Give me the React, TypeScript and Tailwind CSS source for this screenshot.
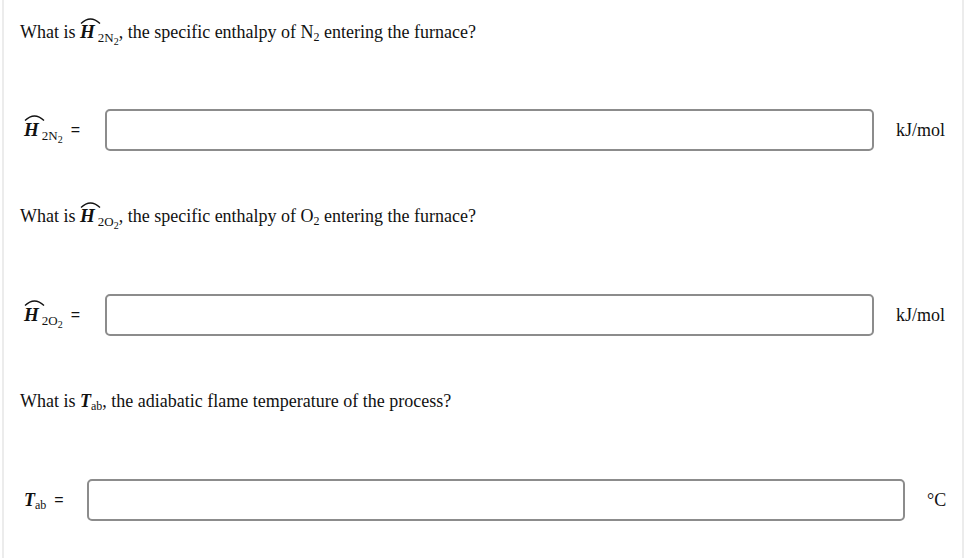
import React from 'react';

function Hat({ sub, subsub }: { sub: string; subsub: string }) {
  return (
    <span className="inline-flex items-baseline whitespace-nowrap">
      <span className="relative inline-block">
        <svg
          className="absolute left-[0px] top-[-4px]"
          width="21"
          height="8"
          viewBox="0 0 21 8"
          fill="none"
        >
          <path d="M1 7.5 Q10.5 -1.5 20 7.5" stroke="#111" strokeWidth="1.4" />
        </svg>
        <span className="text-[19px] font-bold italic leading-none">H</span>
      </span>
      <span className="relative top-[4px] ml-[3px] text-[13px] leading-none">
        {sub}
        <span className="relative top-[3px] text-[10px]">{subsub}</span>
      </span>
    </span>
  );
}

function Tab() {
  return (
    <span className="inline-flex items-baseline whitespace-nowrap">
      <span className="text-[18px] font-bold italic leading-none">T</span>
      <span className="relative top-[3px] text-[12px] leading-none">ab</span>
    </span>
  );
}

function Row({ label, unit, narrow }: { label: React.ReactNode; unit: string; narrow?: boolean }) {
  return (
    <div className="flex h-[42px] items-center">
      <div className={narrow ? 'flex w-[67px] items-center pl-[4px]' : 'flex w-[85px] items-center pl-[4px]'}>
        {label}
        <span className="ml-[8px] font-['Liberation_Sans',sans-serif] text-[16px]">=</span>
      </div>
      <input
        type="text"
        className="h-[42px] flex-1 rounded-[5px] border-2 border-[#8c8c8c] bg-white outline-none"
      />
      <span className={narrow ? 'ml-[22px] w-[17px] whitespace-nowrap' : 'ml-[22px] w-[48px] whitespace-nowrap'}>{unit}</span>
    </div>
  );
}

export default function App() {
  return (
    <div className="h-[558px] w-[966px] bg-white font-['Liberation_Serif',serif] text-[18px] text-[#111]">
      <div className="ml-[2px] h-full w-[962px] border-x-2 border-[#ececec] pl-[16px] pr-[18px] pt-[20px]">
        {/* N2 */}
        <p className="h-[24px] leading-[24px]">
          What is <Hat sub="2N" subsub="2" />, the specific enthalpy of N
          <sub className="text-[12px]">2</sub> entering the furnace?
        </p>
        <div className="mt-[65px]">
          <Row label={<Hat sub="2N" subsub="2" />} unit="kJ/mol" />
        </div>

        {/* O2 */}
        <p className="mt-[53px] h-[24px] leading-[24px]">
          What is <Hat sub="2O" subsub="2" />, the specific enthalpy of O
          <sub className="text-[12px]">2</sub> entering the furnace?
        </p>
        <div className="mt-[66px]">
          <Row label={<Hat sub="2O" subsub="2" />} unit="kJ/mol" />
        </div>

        {/* Tab */}
        <p className="mt-[53px] h-[24px] leading-[24px]">
          What is <Tab />, the adiabatic flame temperature of the process?
        </p>
        <div className="mt-[66px]">
          <Row label={<Tab />} unit="°C" narrow />
        </div>
      </div>
    </div>
  );
}
